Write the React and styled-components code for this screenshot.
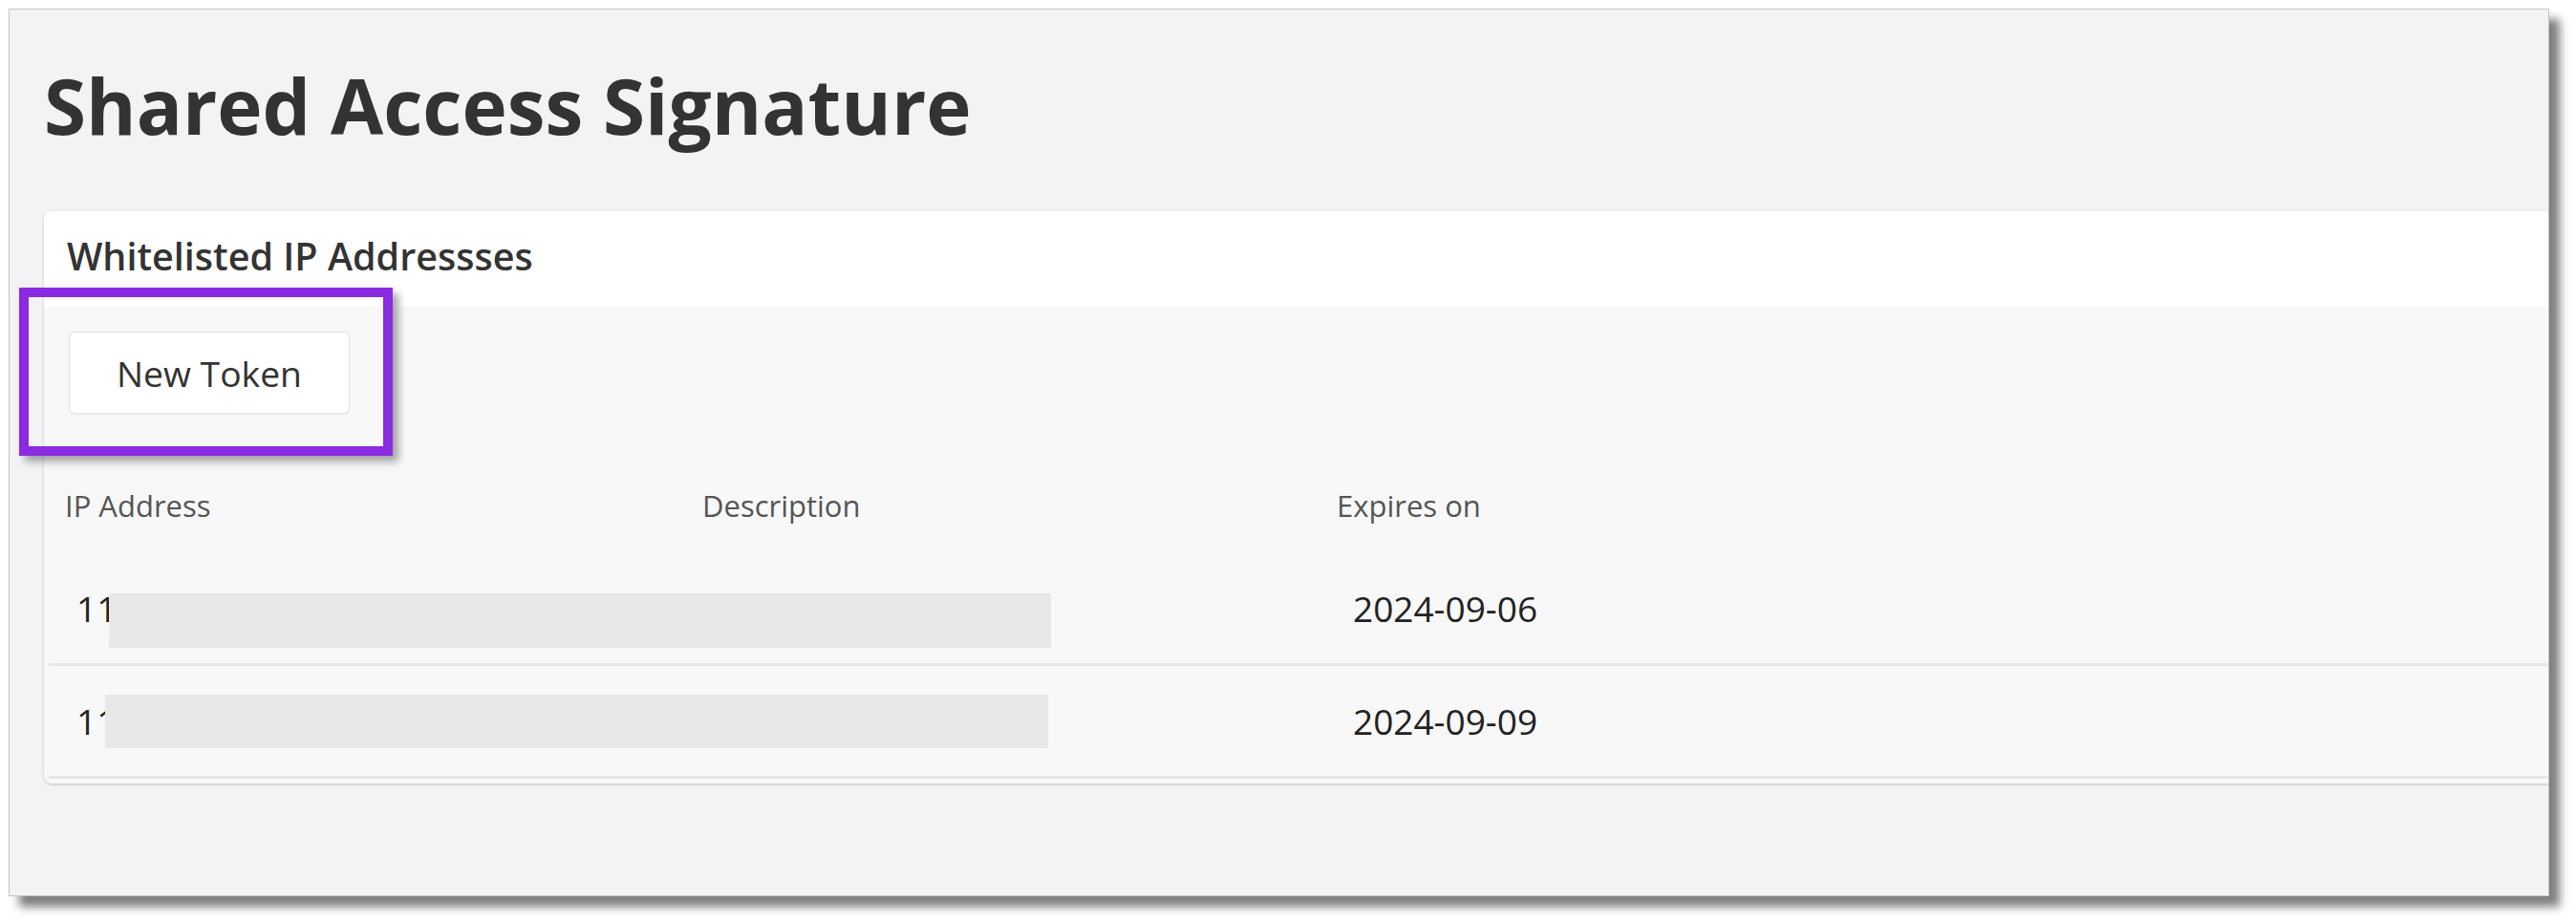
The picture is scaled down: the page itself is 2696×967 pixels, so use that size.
import React from 'react'
import styled, { createGlobalStyle } from 'styled-components'

const tokens = [
    { ip: '11', description: '', expires: '2024-09-06', mask: { left: 63, top: 42, width: 986, height: 57 } },
    { ip: '11', description: '', expires: '2024-09-09', mask: { left: 59, top: 30, width: 987, height: 56 } },
]

const App = () => {
    return (
        <>
            <GlobalStyle />
            <Page>
                <Frame>
                    <Title>Shared Access Signature</Title>
                    <Card>
                        <CardHeader>Whitelisted IP Addressses</CardHeader>
                        <CardBody>
                            <Toolbar>
                                <Button type="button">New Token</Button>
                            </Toolbar>
                            <HeadRow>
                                <HeadCell>IP Address</HeadCell>
                                <HeadCell>Description</HeadCell>
                                <HeadCell>Expires on</HeadCell>
                            </HeadRow>
                            {tokens.map((t, i) => (
                                <Row key={i}>
                                    <Cell>{t.ip}</Cell>
                                    <Cell>{t.description}</Cell>
                                    <Cell $indent={34}>{t.expires}</Cell>
                                    <Redaction style={t.mask} />
                                </Row>
                            ))}
                        </CardBody>
                    </Card>
                    <Highlight />
                </Frame>
            </Page>
        </>
    )
}

const GlobalStyle = createGlobalStyle`
    html, body {
        margin: 0;
        background: #ffffff;
    }
    body {
        font-family: "Open Sans", "Liberation Sans", sans-serif;
        color: #333;
    }
    * { box-sizing: border-box; }
`

const Page = styled.div`
    width: 2696px;
    height: 967px;
    padding: 9px 0 0 9px;
    background: #ffffff;
`

const Frame = styled.div`
    position: relative;
    width: 2659px;
    height: 929px;
    border: 1px solid #c4c4c4;
    background: #f3f2f5;
    box-shadow: 11px 11px 9px rgba(0, 0, 0, 0.5);
    overflow: hidden;
    padding: 60px 0 0 36px;
`

const Title = styled.h1`
    margin: 0;
    font-size: 80px;
    line-height: 80px;
    font-weight: 700;
    color: #333333;
`

const Card = styled.section`
    margin: 71px -30px 0 0;
    background: #f8f8f8;
    border-radius: 8px;
    box-shadow: 0 1px 3px rgba(0, 0, 0, 0.2);
    overflow: hidden;
`

const CardHeader = styled.div`
    height: 100px;
    display: flex;
    align-items: center;
    padding: 0 0 6px 24px;
    background: #ffffff;
    font-size: 39.5px;
    font-weight: 600;
    color: #333333;
`

const CardBody = styled.div`
    padding: 26px 0 5px 5px;
`

const Toolbar = styled.div`
    display: flex;
    padding-left: 21px;
    margin-bottom: 46px;
`

const Button = styled.button`
    width: 294px;
    height: 86px;
    background: #ffffff;
    border: 1px solid #e2e2e2;
    border-radius: 6px;
    box-shadow: 0 1px 2px rgba(0, 0, 0, 0.06);
    font-family: "Open Sans", "Liberation Sans", sans-serif;
    font-size: 37.3px;
    color: #333333;
    padding: 0;
`

const HeadRow = styled.div`
    display: grid;
    grid-template-columns: 667px 664px 1fr;
    align-items: center;
    height: 100px;
`

const HeadCell = styled.div`
    padding-left: 17px;
    font-size: 31px;
    color: #555555;
`

const Row = styled.div`
    position: relative;
    display: grid;
    grid-template-columns: 667px 664px 1fr;
    align-items: center;
    height: 118px;
    border-bottom: 3px solid #e7e7e7;
`

const Cell = styled.div`
    padding-left: ${p => p.$indent || 29}px;
    font-size: 37px;
    color: #222222;
`

const Redaction = styled.div`
    position: absolute;
    background: #e8e8e8;
`

const Highlight = styled.div`
    position: absolute;
    left: 10px;
    top: 291px;
    width: 391px;
    height: 176px;
    border: 10px solid #8a2be2;
    box-shadow: 6px 6px 8px rgba(0, 0, 0, 0.35);
`

export default App
